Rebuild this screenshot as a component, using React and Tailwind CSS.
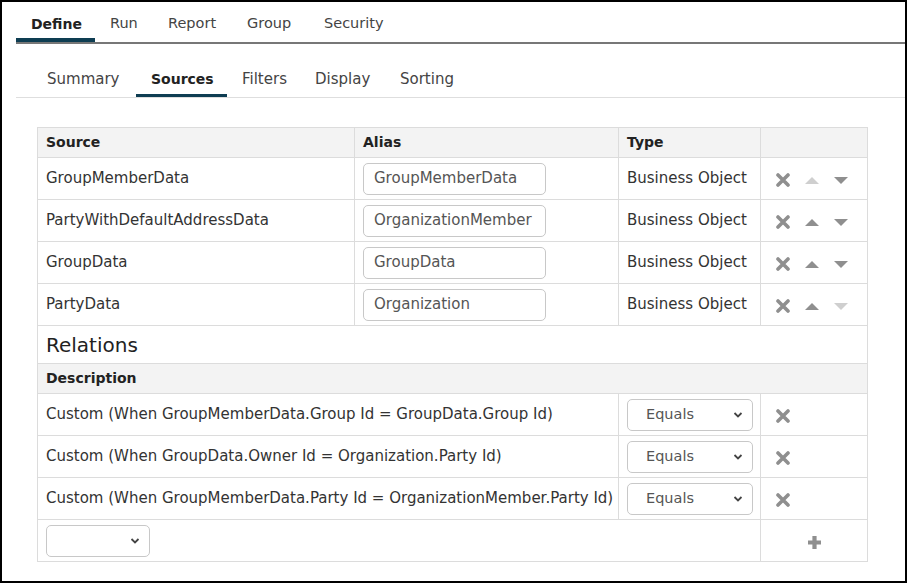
import React from "react";

const font = { fontFamily: "'DejaVu Sans', sans-serif" };

function XIcon({ light }) {
  return (
    <svg width="14" height="14" viewBox="0 0 14 14" className="inline-block">
      <path d="M2 2 L12 12 M12 2 L2 12" stroke={light ? "#cfcfcf" : "#8f8f8f"} strokeWidth="3.6" strokeLinecap="round" />
    </svg>
  );
}
function Up({ light }) {
  return (
    <svg width="14" height="9" viewBox="0 0 14 9" className="inline-block">
      <polygon points="7,1 14,8 0,8" fill={light ? "#cfcfcf" : "#8f8f8f"} />
    </svg>
  );
}
function Down({ light }) {
  return (
    <svg width="14" height="9" viewBox="0 0 14 9" className="inline-block">
      <polygon points="0,1 14,1 7,8" fill={light ? "#cfcfcf" : "#8f8f8f"} />
    </svg>
  );
}
function Plus() {
  return (
    <svg width="15" height="15" viewBox="0 0 15 15" className="inline-block">
      <path d="M7.5 1 V14 M1 7.5 H14" stroke="#8f8f8f" strokeWidth="4.2" />
    </svg>
  );
}
function Chevron() {
  return (
    <svg width="10" height="7" viewBox="0 0 10 7" className="absolute right-[9px] top-1/2 -translate-y-1/2 pointer-events-none">
      <path d="M1.5 1.5 L5 5 L8.5 1.5" stroke="#444" strokeWidth="1.8" fill="none" />
    </svg>
  );
}
function Select({ w, value }) {
  return (
    <div className={`relative ${w} h-[32px] border border-[#c8c8c8] rounded-[5px] bg-white flex items-center pl-[18px] text-[14.5px] text-[#555]`}>
      {value}
      <Chevron />
    </div>
  );
}

const sources = [
  { s: "GroupMemberData", a: "GroupMemberData", upL: true, downL: false },
  { s: "PartyWithDefaultAddressData", a: "OrganizationMember", upL: false, downL: false },
  { s: "GroupData", a: "GroupData", upL: false, downL: false },
  { s: "PartyData", a: "Organization", upL: false, downL: true },
];
const relations = [
  "Custom (When GroupMemberData.Group Id = GroupData.Group Id)",
  "Custom (When GroupData.Owner Id = Organization.Party Id)",
  "Custom (When GroupMemberData.Party Id = OrganizationMember.Party Id)",
];

const topTabs = [
  { t: "Define", w: "w-[79px]", active: true },
  { t: "Run", w: "w-[58px]" },
  { t: "Report", w: "w-[79px]" },
  { t: "Group", w: "w-[77px]" },
  { t: "Security", w: "w-[100px]" },
];
const subTabs = [
  { t: "Summary", w: "w-[104px]" },
  { t: "Sources", w: "w-[91px]", active: true },
  { t: "Filters", w: "w-[73px]" },
  { t: "Display", w: "w-[85px]" },
  { t: "Sorting", w: "w-[90px]" },
];

export default function App() {
  const cell = "border border-[#dcdcdc] px-[8px] align-middle";
  return (
    <div style={font} className="w-[907px] h-[583px] border-2 border-black bg-white text-[15px] text-[#333] overflow-hidden">
      <div className="ml-[14px]">
        <div className="flex h-[42px] items-stretch border-b-2 border-[#777]">
          {topTabs.map((x) => (
            <div key={x.t} className={`${x.w} pl-[15px] flex items-center pt-[8px] border-b-[4px] ${x.active ? "font-bold text-[14px] text-[#222] border-[#0e3d52]" : "text-[14.5px] text-[#444] border-transparent"}`}>{x.t}</div>
          ))}
        </div>
        <div className="flex h-[54px] items-end pl-[16px] border-b border-[#dedede]">
          {subTabs.map((x) => (
            <div key={x.t} className={`${x.w} pl-[15px] h-[35px] pt-[2px] flex items-center border-b-[3px] ${x.active ? "font-bold text-[14px] text-[#222] border-[#0e3d52]" : "text-[#444] border-transparent"}`}>{x.t}</div>
          ))}
        </div>
        <div className="pl-[21px] pt-[29px]">
          <table className="w-[830px] table-fixed border-collapse">
            <colgroup>
              <col className="w-[317px]" />
              <col className="w-[264px]" />
              <col className="w-[142px]" />
              <col className="w-[107px]" />
            </colgroup>
            <tbody>
              <tr className="h-[30px] bg-[#f3f3f3] font-bold text-[14px] text-[#222]">
                <td className={cell}>Source</td>
                <td className={cell}>Alias</td>
                <td className={cell}>Type</td>
                <td className={cell}></td>
              </tr>
              {sources.map((r) => (
                <tr key={r.s} className="h-[42px]">
                  <td className={cell}>{r.s}</td>
                  <td className={cell}>
                    <div className="w-[183px] h-[32px] border border-[#c8c8c8] rounded-[5px] flex items-center pl-[10px] text-[#555] overflow-hidden whitespace-nowrap">{r.a}</div>
                  </td>
                  <td className={`${cell} whitespace-nowrap`}>Business Object</td>
                  <td className={cell}>
                    <div className="flex items-center gap-[15px] pl-[7px] pt-[3px]">
                      <XIcon />
                      <Up light={r.upL} />
                      <Down light={r.downL} />
                    </div>
                  </td>
                </tr>
              ))}
              <tr className="h-[38px]">
                <td colSpan={4} className={`${cell} text-[20px] text-[#222]`}>Relations</td>
              </tr>
              <tr className="h-[30px] bg-[#f3f3f3] font-bold text-[14px] text-[#222]">
                <td colSpan={4} className={cell}>Description</td>
              </tr>
              {relations.map((r) => (
                <tr key={r} className="h-[42px]">
                  <td colSpan={2} className={`${cell} whitespace-nowrap`}>{r}</td>
                  <td className={cell}><Select w="w-[126px]" value="Equals" /></td>
                  <td className={cell}>
                    <div className="pl-[7px] pt-[3px] flex"><XIcon /></div>
                  </td>
                </tr>
              ))}
              <tr className="h-[42px]">
                <td colSpan={3} className="border border-[#dcdcdc] border-r-0 px-[8px]"><Select w="w-[104px]" value="" /></td>
                <td className={cell}>
                  <div className="pl-[38px] pt-[3px] flex"><Plus /></div>
                </td>
              </tr>
            </tbody>
          </table>
        </div>
      </div>
    </div>
  );
}
